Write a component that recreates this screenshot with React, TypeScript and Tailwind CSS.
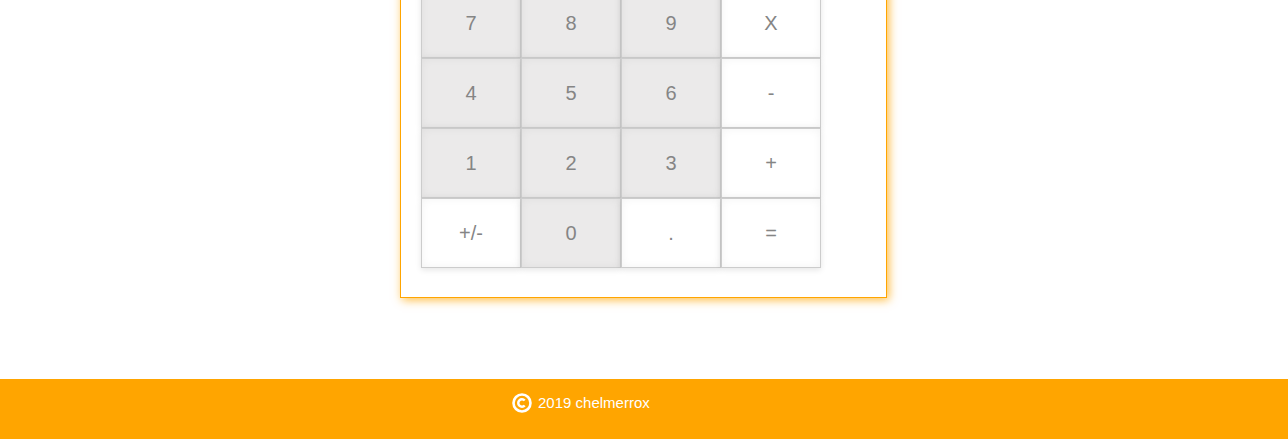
const rows = [
  ['7', '8', '9', 'X'],
  ['4', '5', '6', '-'],
  ['1', '2', '3', '+'],
  ['+/-', '0', '.', '='],
];

const isDigit = (k: string) => /^[0-9]$/.test(k);

const Key = ({ label }: { label: string }) => (
  <button
    className={`w-[100px] h-[70px] border border-[#cccccc] text-[20px] text-[#858585] flex items-center justify-center shadow-[inset_0_0_8px_rgba(0,0,0,0.05),0_2px_6px_rgba(0,0,0,0.1)] ${
      isDigit(label) ? 'bg-[#ebeaea]' : 'bg-white'
    }`}
  >
    {label}
  </button>
);

const CopyIcon = () => (
  <svg width="20" height="20" viewBox="0 0 20 20" fill="none">
    <circle cx="10" cy="10" r="8.5" stroke="white" strokeWidth="2.6" />
    <path
      d="M12.7 7.5 A3.7 3.7 0 1 0 12.7 12.5"
      stroke="white"
      strokeWidth="2.5"
    />
  </svg>
);

export default function App() {
  return (
    <div className="min-h-screen bg-white font-['Liberation_Sans',Arial,sans-serif] overflow-hidden">
      <div className="flex justify-center pr-px">
        <div className="w-[487px] mt-[-12px] border border-[#ffa500] border-t-0 shadow-[2px_2px_9px_rgba(255,165,0,0.75)] pl-5 pb-[29px]">
          <div className="flex flex-col">
            {rows.map((row, i) => (
              <div key={i} className="flex">
                {row.map((k) => (
                  <Key key={k} label={k} />
                ))}
              </div>
            ))}
          </div>
        </div>
      </div>

      <footer className="mt-[81px] h-[60px] bg-[#ffa500]">
        <div className="flex justify-center pr-px">
          <div className="w-[487px] pl-[112px] pt-[13px] flex items-center gap-[6px] text-white text-[15px]">
            <CopyIcon />
            <span>2019 chelmerrox</span>
          </div>
        </div>
      </footer>
    </div>
  );
}
